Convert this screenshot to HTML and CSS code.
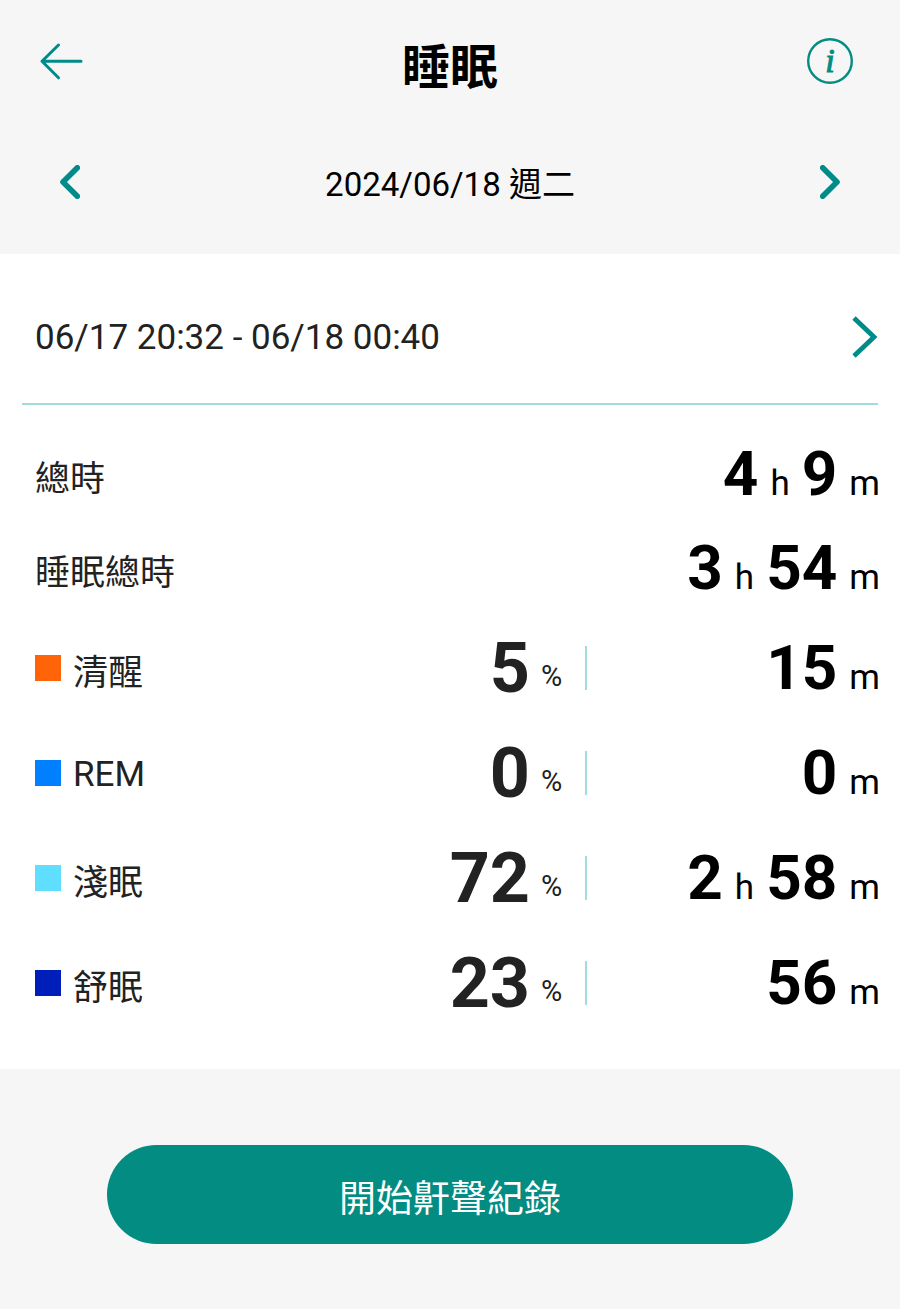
FILE: index.html
```html
<!DOCTYPE html>
<html lang="zh-Hant">
<head>
    <meta charset="UTF-8">
    <meta name="viewport" content="width=device-width, initial-scale=1.0">
    <title>睡眠</title>

    <link rel="stylesheet" href="styles.css">
</head>
<body>

    <header class="header">
        <!-- Title bar -->
        <div class="title-bar">
            <button class="icon-btn" type="button" aria-label="返回">
                <svg width="46" height="46" viewBox="0 0 46 46" fill="none" stroke="#008b8b" stroke-width="3" stroke-linecap="round" stroke-linejoin="round">
                    <path d="M43 23.300H4M20.500 7L4 23.300l16.500 16.500"/>
                </svg>
            </button>
            <h1>睡眠</h1>
            <button class="icon-btn" type="button" aria-label="說明">
                <svg width="46" height="46" viewBox="0 0 46 46">
                    <circle cx="23" cy="23" r="21.800" fill="none" stroke="#028c82" stroke-width="2.400"/>
                    <text class="info-mark" x="23" y="34" text-anchor="middle">i</text>
                </svg>
            </button>
        </div>

        <!-- Date picker -->
        <div class="date-bar">
            <button class="icon-btn" type="button" aria-label="前一天">
                <svg width="20" height="34" viewBox="0 0 20 34" fill="none" stroke="#008b8b" stroke-width="5.600" stroke-linecap="round" stroke-linejoin="round">
                    <path d="M17.300 2.800L3 17l14.300 14.200"/>
                </svg>
            </button>
            <time class="date" datetime="2024-06-18">2024/06/18 週二</time>
            <button class="icon-btn" type="button" aria-label="後一天">
                <svg width="20" height="34" viewBox="0 0 20 34" fill="none" stroke="#008b8b" stroke-width="5.600" stroke-linecap="round" stroke-linejoin="round">
                    <path d="M2.700 2.800L17 17L2.700 31.200"/>
                </svg>
            </button>
        </div>
    </header>

    <main class="card">
        <a class="period" href="#">
            <span>06/17 20:32 - 06/18 00:40</span>
            <svg width="26" height="42" viewBox="0 0 26 42" fill="none" stroke="#008b8b" stroke-width="4.800">
                <path d="M2 2L22 21L2 40"/>
            </svg>
        </a>

        <table class="stats">
            <tbody class="totals">
                <tr>
                    <th scope="row" colspan="2">總時</th>
                    <td><div class="duration"><b>4</b><span>h</span><b>9</b><span>m</span></div></td>
                </tr>
                <tr>
                    <th scope="row" colspan="2">睡眠總時</th>
                    <td><div class="duration"><b>3</b><span>h</span><b>54</b><span>m</span></div></td>
                </tr>
            </tbody>
            <!-- Sleep stages -->
            <tbody class="stages">
                <tr>
                    <th scope="row"><div class="stage"><i class="swatch awake"></i><span>清醒</span></div></th>
                    <td><div class="percent"><b>5</b><span>%</span></div></td>
                    <td><div class="duration"><b>15</b><span>m</span></div></td>
                </tr>
                <tr>
                    <th scope="row"><div class="stage"><i class="swatch rem"></i><span>REM</span></div></th>
                    <td><div class="percent"><b>0</b><span>%</span></div></td>
                    <td><div class="duration"><b>0</b><span>m</span></div></td>
                </tr>
                <tr>
                    <th scope="row"><div class="stage"><i class="swatch light"></i><span>淺眠</span></div></th>
                    <td><div class="percent"><b>72</b><span>%</span></div></td>
                    <td><div class="duration"><b>2</b><span>h</span><b>58</b><span>m</span></div></td>
                </tr>
                <tr>
                    <th scope="row"><div class="stage"><i class="swatch deep"></i><span>舒眠</span></div></th>
                    <td><div class="percent"><b>23</b><span>%</span></div></td>
                    <td><div class="duration"><b>56</b><span>m</span></div></td>
                </tr>
            </tbody>
        </table>
    </main>

    <footer class="footer">
        <button class="start-btn" type="button">開始鼾聲紀錄</button>
    </footer>

</body>
</html>
```
FILE: styles.css
```css
* {
    box-sizing: border-box;
}

body {
    margin: 0;
    font-family: Roboto, "Noto Sans CJK TC", sans-serif;
    font-size: 35px;
    color: #222;
    background-color: #f6f6f6;
}

button {
    font-family: inherit;
    border: none;
    cursor: pointer;
}

svg {
    display: block;
}

/* Header */
.title-bar {
    display: flex;
    align-items: center;
    height: 122px;
    padding: 0 47px 0 38px;
}

.title-bar h1 {
    flex: 1;
    margin: 0;
    padding: 14px 0 0 9px;
    font-size: 48px;
    line-height: 56px;
    text-align: center;
    color: #000;
}

.icon-btn {
    padding: 0;
    background: none;
}

.info-mark {
    font: italic 34px "Liberation Serif", serif;
    fill: #028c82;
    stroke: #028c82;
    stroke-width: 1px;
}

.date-bar {
    display: flex;
    justify-content: space-between;
    align-items: center;
    height: 132px;
    padding: 0 60px 12px;
}

.date {
    font-size: 33px;
    color: #000;
}

/* White panel */
.card {
    padding: 0 20px 34px 22px;
    background-color: #fff;
}

.period {
    display: flex;
    justify-content: space-between;
    align-items: center;
    height: 151px;
    padding: 16px 0 0 13px;
    margin-right: 2px;
    border-bottom: 2px solid #a3dcdc;
    color: #222;
    text-decoration: none;
}

.period span {
    padding-top: 2px;
}

.stats {
    width: 100%;
    margin-top: 22px;
    border-collapse: collapse;
    table-layout: fixed;
}

.stats th,
.stats td {
    padding: 0;
}

.stats td {
    width: 34%;
}

.stats th {
    padding-left: 13px;
    font-weight: normal;
    text-align: left;
}

.totals tr {
    height: 94px;
}

.stages tr {
    height: 105px;
}

.totals th {
    padding-top: 3px;
}

.stage {
    display: flex;
    align-items: center;
    gap: 12px;
}

.stage span {
    padding-top: 4px;
}

.swatch {
    width: 26px;
    height: 26px;
}

.awake { background-color: #ff6508; }
.rem { background-color: #0080ff; }
.light { background-color: #60deff; }
.deep { background-color: #001eb9; }

.duration,
.percent {
    display: flex;
    justify-content: flex-end;
    gap: 12px;
}

.duration {
    align-items: baseline;
    color: #000;
}

.duration b {
    font-size: 62px;
    line-height: 72px;
}

.percent {
    position: relative;
    align-items: flex-end;
    gap: 11px;
    padding-right: 26px;
}

.percent b {
    font-size: 70px;
    line-height: 82px;
}

.percent span {
    padding-bottom: 16px;
    font-size: 29px;
    line-height: 34px;
}

/* Divider between percent and duration */
.percent::after {
    content: "";
    position: absolute;
    top: 19px;
    right: 1px;
    width: 2px;
    height: 44px;
    background-color: #a3dcdc;
}

/* Footer */
.footer {
    padding: 76px 107px 65px;
}

.start-btn {
    width: 100%;
    height: 99px;
    padding: 3px 0 0;
    border-radius: 50px;
    font-size: 37px;
    color: #fff;
    background-color: #028c82;
}
```
